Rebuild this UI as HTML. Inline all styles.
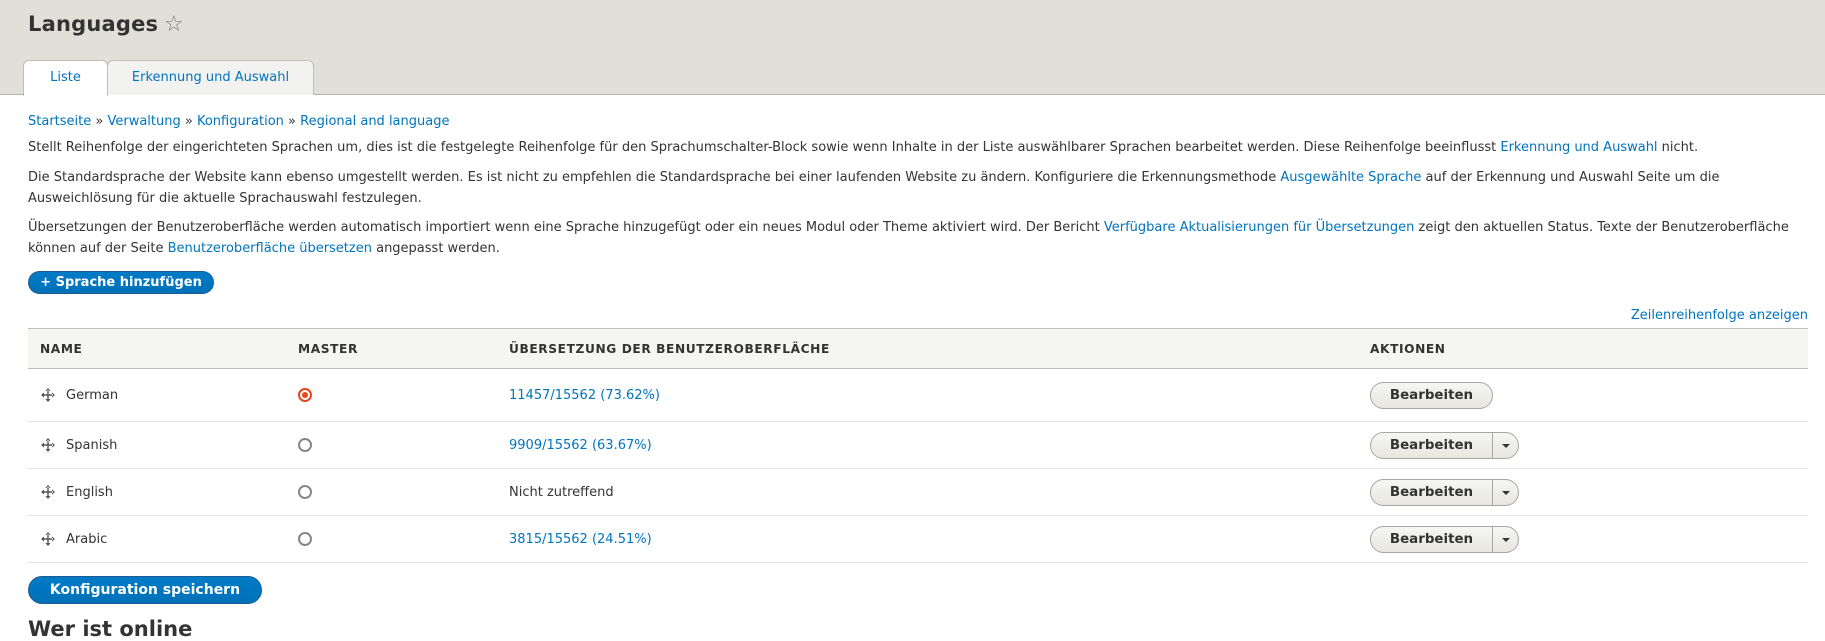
<!DOCTYPE html>
<html><head><meta charset="utf-8"><style>
*{box-sizing:border-box;margin:0;padding:0}
body{width:1825px;height:628px;overflow:hidden;background:#fff;font-family:"DejaVu Sans","Liberation Sans",sans-serif;color:#333;font-size:13px;position:relative}
a{color:#0074bd;text-decoration:none}
.hdr{position:absolute;left:0;top:0;width:1825px;height:95px;background:#e0e0d8;border-bottom:1px solid #b3b3ab}
h1{position:absolute;left:28px;top:12px;font-size:21px;font-weight:bold;color:#333;letter-spacing:0.2px}
.star{position:absolute;left:164px;top:12px;font-size:22px;color:#777}
.tab{position:absolute;top:60px;height:35px;border:1px solid #bfbfba;border-bottom:none;border-radius:6px 6px 0 0;background:#f2f2f0;font-size:13px;text-align:center;line-height:33px;color:#0074bd}
.tab.a{background:#fff;height:36px;z-index:2}
.t{position:absolute;left:28px;font-size:13px;line-height:21px;white-space:nowrap}
.btnb{position:absolute;background:linear-gradient(#007bc6,#0071b8);border:1px solid #1e5c90;border-radius:20px;color:#fff;font-weight:bold;text-align:center}
table{position:absolute;left:28px;top:328px;width:1780px;border-collapse:collapse;font-size:13px}
th{background:#f5f5f2;height:40px;text-align:left;font-size:12.2px;letter-spacing:0.6px;font-weight:bold;border-top:1px solid #bebfb9;border-bottom:1px solid #bebfb9;color:#333}
td{border-bottom:1px solid #e6e4df;height:47px;position:relative}
tr.g td{height:53px}
.drag{position:absolute;left:12px;top:50%;margin-top:-8px}
.radio{display:inline-block;width:14px;height:14px;border:2px solid #878787;border-radius:50%;vertical-align:middle}
.radio.on{border-color:#e6461e;position:relative}
.radio.on:after{content:"";position:absolute;left:2px;top:2px;width:6px;height:6px;border-radius:50%;background:#e6461e}
.eb{display:inline-flex;height:27px;border:1px solid #a6a6a6;border-radius:14px;background:linear-gradient(#f6f6f3,#e7e7df);font-weight:bold;font-size:13.4px;overflow:hidden;vertical-align:middle}
.eb span{display:block;width:121px;text-align:center;line-height:25px;letter-spacing:0}
.eb i{display:block;width:26px;border-left:1px solid #a6a6a6;position:relative}
.eb i:after{content:"";position:absolute;left:9px;top:11px;border:4px solid transparent;border-top:4px solid #333}
</style></head><body>
<div class="hdr"></div>
<h1>Languages</h1><div class="star">☆</div>
<div class="tab a" style="left:23px;width:85px">Liste</div>
<div class="tab" style="left:107px;width:207px">Erkennung und Auswahl</div>

<div class="t" style="top:111px"><a>Startseite</a> » <a>Verwaltung</a> » <a>Konfiguration</a> » <a>Regional and language</a></div>
<div class="t" style="top:137px">Stellt Reihenfolge der eingerichteten Sprachen um, dies ist die festgelegte Reihenfolge für den Sprachumschalter-Block sowie wenn Inhalte in der Liste auswählbarer Sprachen bearbeitet werden. Diese Reihenfolge beeinflusst <a>Erkennung und Auswahl</a> nicht.</div>
<div class="t" style="top:167px">Die Standardsprache der Website kann ebenso umgestellt werden. Es ist nicht zu empfehlen die Standardsprache bei einer laufenden Website zu ändern. Konfiguriere die Erkennungsmethode <a>Ausgewählte Sprache</a> auf der Erkennung und Auswahl Seite um die<br>Ausweichlösung für die aktuelle Sprachauswahl festzulegen.</div>
<div class="t" style="top:217px">Übersetzungen der Benutzeroberfläche werden automatisch importiert wenn eine Sprache hinzugefügt oder ein neues Modul oder Theme aktiviert wird. Der Bericht <a>Verfügbare Aktualisierungen für Übersetzungen</a> zeigt den aktuellen Status. Texte der Benutzeroberfläche<br>können auf der Seite <a>Benutzeroberfläche übersetzen</a> angepasst werden.</div>

<div class="btnb" style="left:28px;top:271px;width:186px;height:23px;font-size:13px;line-height:21px">+ Sprache hinzufügen</div>
<div class="t" style="left:auto;right:17px;top:305px"><a>Zeilenreihenfolge anzeigen</a></div>

<table>
<tr><th style="padding-left:12px;width:270px">NAME</th><th style="width:211px">MASTER</th><th style="width:861px">ÜBERSETZUNG DER BENUTZEROBERFLÄCHE</th><th>AKTIONEN</th></tr>
<tr class="g"><td style="padding-left:38px"><svg class="drag" width="16" height="16" viewBox="0 0 16 16"><path d="M8 1L5.5 4h5zM8 15l-2.5-3h5zM1 8l3-2.5v5zM15 8l-3-2.5v5zM7.3 3h1.4v10H7.3zM3 7.3h10v1.4H3z" fill="#555"/></svg>German</td><td><span class="radio on"></span></td><td><a>11457/15562 (73.62%)</a></td><td><span class="eb"><span>Bearbeiten</span></span></td></tr>
<tr><td style="padding-left:38px"><svg class="drag" width="16" height="16" viewBox="0 0 16 16"><path d="M8 1L5.5 4h5zM8 15l-2.5-3h5zM1 8l3-2.5v5zM15 8l-3-2.5v5zM7.3 3h1.4v10H7.3zM3 7.3h10v1.4H3z" fill="#555"/></svg>Spanish</td><td><span class="radio"></span></td><td><a>9909/15562 (63.67%)</a></td><td><span class="eb"><span>Bearbeiten</span><i></i></span></td></tr>
<tr><td style="padding-left:38px"><svg class="drag" width="16" height="16" viewBox="0 0 16 16"><path d="M8 1L5.5 4h5zM8 15l-2.5-3h5zM1 8l3-2.5v5zM15 8l-3-2.5v5zM7.3 3h1.4v10H7.3zM3 7.3h10v1.4H3z" fill="#555"/></svg>English</td><td><span class="radio"></span></td><td>Nicht zutreffend</td><td><span class="eb"><span>Bearbeiten</span><i></i></span></td></tr>
<tr><td style="padding-left:38px"><svg class="drag" width="16" height="16" viewBox="0 0 16 16"><path d="M8 1L5.5 4h5zM8 15l-2.5-3h5zM1 8l3-2.5v5zM15 8l-3-2.5v5zM7.3 3h1.4v10H7.3zM3 7.3h10v1.4H3z" fill="#555"/></svg>Arabic</td><td><span class="radio"></span></td><td><a>3815/15562 (24.51%)</a></td><td><span class="eb"><span>Bearbeiten</span><i></i></span></td></tr>
</table>

<div class="btnb" style="left:28px;top:576px;width:234px;height:28px;font-size:14px;line-height:26px">Konfiguration speichern</div>
<div style="position:absolute;left:28px;top:617px;font-size:21px;font-weight:bold;color:#333">Wer ist online</div>
</body></html>
